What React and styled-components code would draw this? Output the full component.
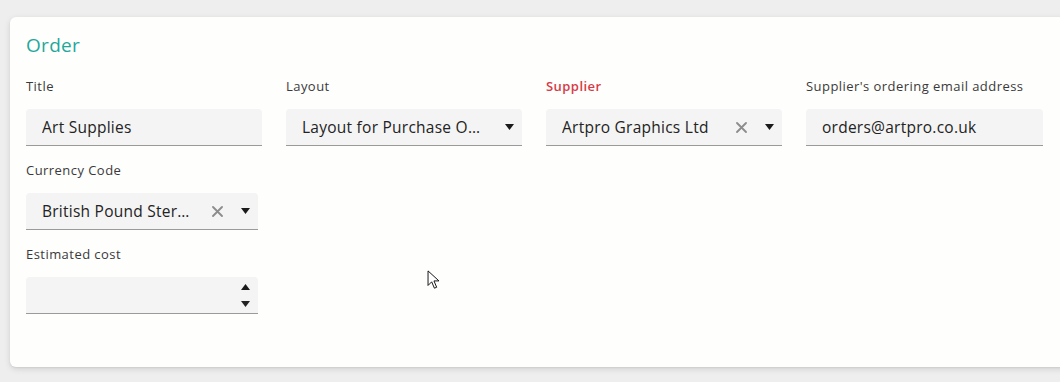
import React from 'react';
import styled, { createGlobalStyle } from 'styled-components';

const Global = createGlobalStyle`
  html, body {
    margin: 0;
    background: #eeeeee;
    overflow: hidden;
    font-family: "Open Sans", Lato, sans-serif;
  }
`;

const Page = styled.div`
  padding: 17px 0 0 10px;
  height: 382px;
  box-sizing: border-box;
  position: relative;
`;

const Card = styled.section`
  width: 1080px;
  box-sizing: border-box;
  background: #fefefd;
  border-radius: 6px;
  box-shadow: 0 2px 6px rgba(0, 0, 0, 0.12), 0 1px 2px rgba(0, 0, 0, 0.06);
  padding: 16px 16px 53px 16px;
`;

const Heading = styled.h2`
  margin: 0 0 20px;
  font-size: 19px;
  line-height: 24px;
  font-weight: 400;
  letter-spacing: 0.3px;
  color: #1ea89b;
`;

const Row = styled.div`
  display: flex;
  gap: 24px;
  margin-bottom: 15px;
  &:last-child { margin-bottom: 0; }
`;

const Field = styled.div`
  width: ${p => p.$width || 236}px;
  display: flex;
  flex-direction: column;
`;

const Label = styled.label`
  font-size: 13px;
  line-height: 18px;
  letter-spacing: 0.45px;
  margin-bottom: 14px;
  color: ${p => (p.$required ? '#d63b47' : '#3a3a3a')};
  font-weight: ${p => (p.$required ? 600 : 400)};
  white-space: nowrap;
`;

const Box = styled.div`
  height: ${p => p.$height || 36}px;
  background: #f4f4f4;
  border-radius: 4px 4px 0 0;
  border-bottom: 1px solid #9a9a9a;
  display: flex;
  align-items: center;
  padding: 0 8px 0 16px;
  font-size: 15.5px;
  letter-spacing: 0.25px;
  color: #232323;
`;

const Value = styled.span`
  flex: 1;
  min-width: 0;
  white-space: nowrap;
  overflow: hidden;
  text-overflow: ellipsis;
  padding-right: ${p => p.$pad || 0}px;
`;

const Clear = styled.span`
  width: 12px;
  display: flex;
  justify-content: center;
`;

const Arrow = styled.span`
  width: 10px;
  margin-left: ${p => (p.$after ? 17 : 12)}px;
  display: flex;
  justify-content: center;
  color: #1a1a1a;
`;

const Spinner = styled.div`
  margin-left: auto;
  margin-right: 0;
  display: flex;
  flex-direction: column;
  gap: 11px;
`;

const Cursor = styled.svg`
  position: absolute;
  left: 427px;
  top: 270px;
`;

const Down = () => (
  <svg width="9" height="6" viewBox="0 0 9 6"><path d="M0 0h9L4.5 6z" fill="currentColor" /></svg>
);
const Up = () => (
  <svg width="9" height="6" viewBox="0 0 9 6"><path d="M0 6h9L4.5 0z" fill="#1a1a1a" /></svg>
);
const XIcon = () => (
  <svg width="11" height="11" viewBox="0 0 11 11">
    <path d="M1 1l9 9M10 1l-9 9" stroke="#8c8c8c" strokeWidth="1.8" strokeLinecap="round" />
  </svg>
);

const Select = ({ value, clearable }) => (
  <Box>
    <Value $pad={clearable ? 19 : 12}>{value}</Value>
    {clearable && <Clear><XIcon /></Clear>}
    <Arrow $after={clearable}><Down /></Arrow>
  </Box>
);

export default function App() {
  return (
    <Page>
      <Global />
      <Card>
        <Heading>Order</Heading>
        <Row>
          <Field>
            <Label>Title</Label>
            <Box><Value>Art Supplies</Value></Box>
          </Field>
          <Field>
            <Label>Layout</Label>
            <Select value="Layout for Purchase Orders" />
          </Field>
          <Field>
            <Label $required>Supplier</Label>
            <Select value="Artpro Graphics Ltd" clearable />
          </Field>
          <Field $width={237}>
            <Label>Supplier's ordering email address</Label>
            <Box><Value>orders@artpro.co.uk</Value></Box>
          </Field>
        </Row>
        <Row>
          <Field $width={232}>
            <Label>Currency Code</Label>
            <Select value="British Pound Sterling" clearable />
          </Field>
        </Row>
        <Row>
          <Field $width={232}>
            <Label>Estimated cost</Label>
            <Box>
              <Spinner><Up /><Down /></Spinner>
            </Box>
          </Field>
        </Row>
      </Card>
      <Cursor width="13" height="20" viewBox="0 0 14 22">
        <path d="M1 1v16l4-4 3 7 2.5-1-3-7H13z" fill="#fff" stroke="#000" strokeWidth="1" strokeLinejoin="round" />
      </Cursor>
    </Page>
  );
}
